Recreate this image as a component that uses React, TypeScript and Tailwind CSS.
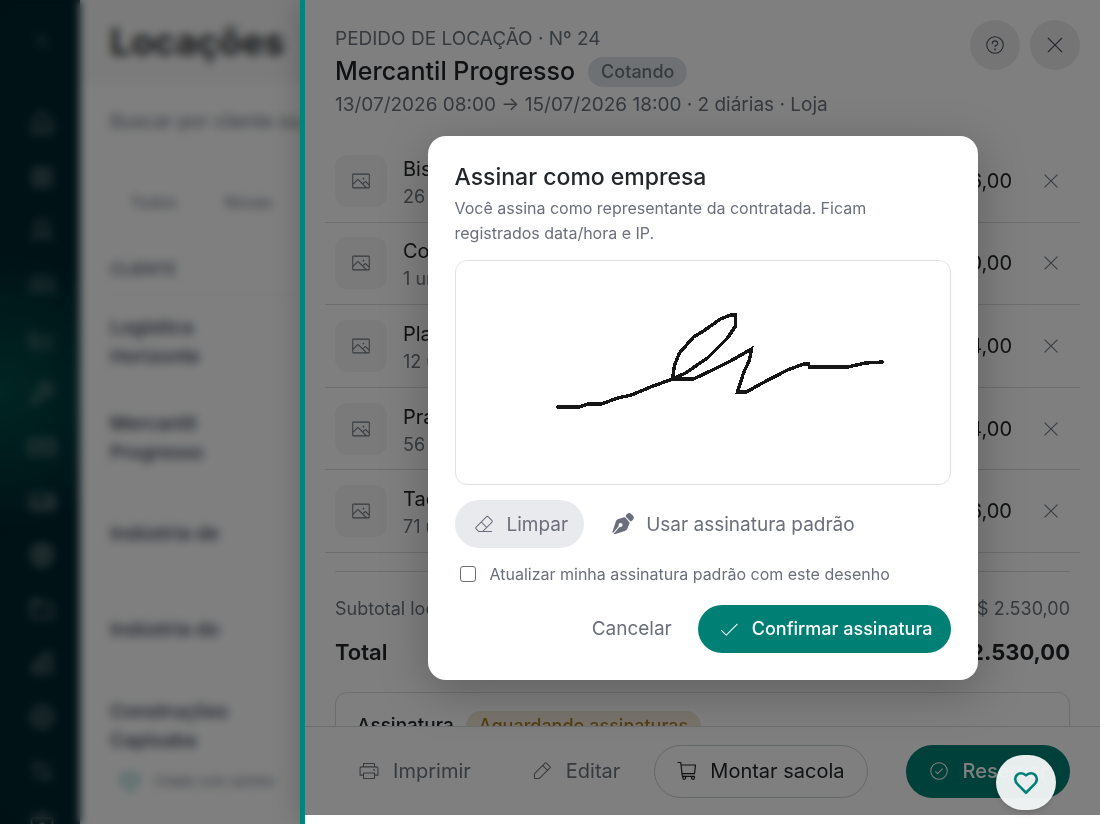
import { useState } from 'react'
import type { ReactNode } from 'react'
import {
  PiArrowsLeftRight,
  PiBriefcase,
  PiChartBar,
  PiChartLine,
  PiCheckCircleLight,
  PiCheckLight,
  PiEraserLight,
  PiFolder,
  PiGear,
  PiGlobe,
  PiHouse,
  PiImageLight,
  PiMoney,
  PiPencilSimpleLight,
  PiPrinterLight,
  PiQuestionLight,
  PiSquaresFour,
  PiTruck,
  PiUser,
  PiUsers,
  PiWrench,
  PiXLight,
} from 'react-icons/pi'
import { LuHeart } from 'react-icons/lu'

const NAV_ICONS = [
  PiHouse,
  PiSquaresFour,
  PiUser,
  PiUsers,
  PiChartLine,
  PiWrench,
  PiMoney,
  PiTruck,
  PiGlobe,
  PiFolder,
  PiChartBar,
  PiGear,
  PiArrowsLeftRight,
  PiBriefcase,
]

const CLIENTS = ['Logística Horizonte', 'Mercantil Progresso', 'Indústria de', 'Indústria do', 'Construções Capixaba']

const ITEMS = [
  { name: 'Bistrô', qty: '26 un', price: 'R$ 676,00' },
  { name: 'Copo', qty: '1 un', price: 'R$ 350,00' },
  { name: 'Placa', qty: '12 un', price: 'R$ 564,00' },
  { name: 'Prato', qty: '56 un', price: 'R$ 504,00' },
  { name: 'Taça', qty: '71 un', price: 'R$ 436,00' },
]

const SIGNATURE =
  'M101 146H123L131 143H145L161 137L175 134L194 126L216 118L229 112L251 97L271 77L279 65V54H274L264 58L247 70L237 76L223 92L218 104L216 118H237L256 109L274 100L295 88L293 99L287 112L281 131H290L304 123L331 109L347 103H352L353 106H391L409 102L426 101'

function CartIcon() {
  return (
    <svg viewBox="0 0 20 20" className="size-5 shrink-0" fill="none" stroke="currentColor" strokeWidth="1.2">
      <path d="M1 1.5h2.8l1.2 11.2M4.2 4h14.3l-1 8.7H5l.5 2.6h12" strokeLinejoin="round" strokeLinecap="round" />
      <circle cx="7.2" cy="16.8" r="1.5" />
      <circle cx="16" cy="16.8" r="1.5" />
    </svg>
  )
}

function PenNibIcon() {
  return (
    <svg viewBox="0 0 66 66" className="size-[22px] shrink-0" fill="currentColor">
      <path d="M45 3Q51-2 57 2L63 8Q68 14 63 20L59 24Q56 26 53 23L43 13Q40 10 42 7Z" />
      <path d="M36 13Q39 12 41 15L51 26Q54 28 52 32L46 47Q44 52 38 54L8 64L5 62L22 43Q30 43 32 37Q32 30 25 30Q19 31 20 40L3 60L1 58L12 24Q14 19 19 18Z" />
    </svg>
  )
}

function Sidebar() {
  return (
    <nav
      aria-label="Principal"
      className="flex w-20 shrink-0 flex-col items-center bg-[#00242c] bg-[radial-gradient(circle_at_0px_390px,#004c46_0px,#00242c_140px)] pl-1 text-[#82908f]"
    >
      <div className="mb-3.5 flex h-[82px] shrink-0 items-center">
        <PiArrowsLeftRight className="size-4" />
      </div>
      {NAV_ICONS.map((Icon, i) => (
        <div key={i} className="flex h-[54px] shrink-0 items-center">
          <Icon className="size-7" />
        </div>
      ))}
    </nav>
  )
}

function RentalsPage() {
  return (
    <div className="flex h-full">
      <Sidebar />
      <main className="flex-1 bg-white text-gray-600">
        <h1 className="flex h-[84px] items-center bg-[#f7f7f7] pl-[30px] text-[37px] font-bold text-[#2c2f32]">Locações</h1>
        <div className="pl-[30px]">
          <p className="flex h-19 items-center text-[19px] text-gray-500">Buscar por cliente ou número</p>
          <div className="flex h-21 items-center gap-12 pl-5 text-[16px] text-gray-500">
            <span>Todos</span>
            <span>Novas</span>
          </div>
          <div className="flex h-[50px] items-center border-b border-gray-200 text-[16px] font-medium">CLIENTE</div>
          {CLIENTS.map((client, i) => (
            <div
              key={i}
              className="flex h-24 items-center border-b border-gray-100 text-[19px] leading-[29px] font-semibold"
            >
              <span className="w-32">{client}</span>
            </div>
          ))}
        </div>
      </main>
      <div className="absolute bottom-8 left-[120px] flex items-center gap-3.5 text-[13px] text-gray-500">
        <LuHeart className="size-5 text-teal-600" />
        Criado com carinho
      </div>
    </div>
  )
}

function RoundButton({ label, children }: { label: string; children: ReactNode }) {
  return (
    <button
      type="button"
      aria-label={label}
      className="flex size-[50px] items-center justify-center rounded-full bg-[#ebebeb] text-[#464a5e]"
    >
      {children}
    </button>
  )
}

function OrderHeader() {
  return (
    <header className="flex shrink-0 items-start justify-between pt-5 pr-5 pb-[19px] pl-[30px]">
      <div className="pt-0.5 text-[19px] leading-[33px] text-[#6c757d]">
        <p>PEDIDO DE LOCAÇÃO · Nº 24</p>
        <div className="flex items-center gap-[13px]">
          <h2 className="text-[25px] leading-[33px] font-medium text-[#212529]">Mercantil Progresso</h2>
          <span className="rounded-full bg-[#dde3e6] px-[13px] text-[18px] leading-[30px] font-medium">Cotando</span>
        </div>
        <p>13/07/2026 08:00 → 15/07/2026 18:00 · 2 diárias · Loja</p>
      </div>
      <div className="flex gap-2.5">
        <RoundButton label="Ajuda">
          <PiQuestionLight className="size-[22px]" />
        </RoundButton>
        <RoundButton label="Fechar">
          <PiXLight className="size-6" />
        </RoundButton>
      </div>
    </header>
  )
}

function OrderItems() {
  return (
    <ul className="mx-5 grid h-[413px] auto-rows-fr">
      {ITEMS.map((item) => (
        <li key={item.name} className="flex items-center border-b border-[#d5dcdf] pr-[18px] pl-2.5">
          <span className="flex size-[52px] items-center justify-center rounded-xl bg-[#f4f5f6] text-[#6c757d]">
            <PiImageLight className="size-[22px]" />
          </span>
          <div className="ml-4 flex-1 pt-1 leading-7">
            <p className="text-[20px] text-[#212529]">{item.name}</p>
            <p className="text-[18px] text-[#6c757d]">{item.qty}</p>
          </div>
          <span className="text-[20px] text-[#212529]">{item.price}</span>
          <button type="button" aria-label={`Remover ${item.name}`} className="ml-7 text-[#6c757d]">
            <PiXLight className="size-[22px]" />
          </button>
        </li>
      ))}
    </ul>
  )
}

function OrderTotals() {
  return (
    <div className="mx-[30px] mt-[18px] border-t border-[#d5dcdf] pt-5">
      <div className="flex h-8 items-center justify-between text-[18px] text-[#6c757d]">
        <span>Subtotal locação</span>
        <span>R$ 2.530,00</span>
      </div>
      <div className="mt-3 flex h-8 items-center justify-between text-[22px] font-bold text-[#212529]">
        <span className="font-semibold">Total</span>
        <span>R$ 2.530,00</span>
      </div>
      <div className="mt-6 flex items-center gap-3 rounded-xl border border-[#d5dcdf] px-[21px] py-[18px]">
        <h3 className="text-[19px] font-medium text-[#212529]">Assinatura</h3>
        <span className="rounded-full bg-[#f1e8d8] px-[13px] text-[18px] leading-[30px] font-medium text-[#a87b2b]">
          Aguardando assinaturas
        </span>
      </div>
    </div>
  )
}

function OrderFooter() {
  return (
    <footer className="flex h-[89px] shrink-0 items-center justify-end border-t border-[#d5dcdf] bg-white pr-[30px] text-[20px] text-[#6c757d]">
      <button type="button" className="flex h-[53px] items-center gap-[13px] px-[22px]">
        <PiPrinterLight className="size-[22px]" />
        Imprimir
      </button>
      <button type="button" className="ml-4 flex h-[53px] items-center gap-[13px] px-[22px]">
        <PiPencilSimpleLight className="size-[22px]" />
        Editar
      </button>
      <button
        type="button"
        className="ml-3 flex h-[53px] items-center gap-[13px] rounded-full border border-[#c5ced2] px-[22px] text-[#212529]"
      >
        <CartIcon />
        Montar sacola
      </button>
      <button
        type="button"
        className="ml-[38px] flex h-[53px] items-center gap-[13px] rounded-full bg-[#008075] px-[22px] font-medium text-white"
      >
        <PiCheckCircleLight className="size-[22px]" />
        Reservar
      </button>
    </footer>
  )
}

function SignDialog() {
  const [updateDefault, setUpdateDefault] = useState(false)

  return (
    <section
      role="dialog"
      aria-labelledby="sign-title"
      className="w-[550px] max-w-full rounded-[18px] bg-white p-[27px] text-[#6b6f7b] shadow-[0_12px_48px_rgba(0,0,0,0.25)]"
    >
      <h2 id="sign-title" className="text-[23px] leading-[29px] font-medium text-[#24272a]">
        Assinar como empresa
      </h2>
      <p className="mt-1 text-[16px] leading-[25px]">
        Você assina como representante da contratada. Ficam registrados data/hora e IP.
      </p>

      <div className="mt-3.5 h-[225px] rounded-xl border border-[#dfe3e8]">
        <svg viewBox="0 0 493 223" className="size-full" role="img" aria-label="Assinatura" shapeRendering="crispEdges">
          <path d={SIGNATURE} fill="none" stroke="#161616" strokeWidth="3.4" strokeLinecap="round" />
        </svg>
      </div>

      <div className="mt-[15px] flex items-center gap-2 text-[19px]">
        <button type="button" className="flex h-12 items-center gap-3 rounded-full bg-[#e8eaee] pr-4 pl-[18px]">
          <PiEraserLight className="size-[22px]" />
          <span className="pt-1">Limpar</span>
        </button>
        <button type="button" className="flex h-12 items-center gap-3 px-5">
          <PenNibIcon />
          <span className="pt-1">Usar assinatura padrão</span>
        </button>
      </div>

      <label className="mt-3.5 flex h-6 items-center gap-3.5 pl-[5px] text-[16px]">
        <input
          type="checkbox"
          checked={updateDefault}
          onChange={(e) => setUpdateDefault(e.target.checked)}
          className="size-4 appearance-none rounded-[3px] border border-[#6b6f7b] bg-white checked:bg-[#008075]"
        />
        Atualizar minha assinatura padrão com este desenho
      </label>

      <div className="mt-[19px] flex items-center justify-end gap-2 text-[19px]">
        <button type="button" className="h-12 px-[18px] pt-0.5">
          Cancelar
        </button>
        <button
          type="button"
          className="flex h-12 items-center gap-3 rounded-full bg-[#008075] pr-[18px] pl-5 text-[18px] font-medium text-white"
        >
          <PiCheckLight className="size-[22px]" />
          Confirmar assinatura
        </button>
      </div>
    </section>
  )
}

export default function App() {
  return (
    <div className="relative h-screen overflow-hidden bg-white font-['Inter',sans-serif]">
      <RentalsPage />
      <div className="absolute inset-0 bg-black/50 backdrop-blur-[5px]" />

      <aside className="absolute inset-y-0 right-0 w-[800px] max-w-full border-l-[5px] border-[#00857a] bg-white pb-[9px] shadow-[0_0_28px_rgba(0,0,0,0.2)]">
        <div className="relative flex h-full flex-col overflow-hidden">
          <OrderHeader />
          <div className="min-h-0 flex-1 overflow-hidden">
            <OrderItems />
            <OrderTotals />
          </div>
          <OrderFooter />
          <div className="absolute inset-0 flex items-center justify-center bg-black/50">
            <SignDialog />
          </div>
        </div>
      </aside>

      <button
        type="button"
        aria-label="Favoritos"
        className="absolute right-11 bottom-3.5 flex h-[55px] w-[60px] items-center justify-center rounded-full bg-[#f4f8f8]/95 text-[#008075] shadow-md"
      >
        <LuHeart className="size-[26px]" strokeWidth={2.4} />
      </button>
    </div>
  )
}
